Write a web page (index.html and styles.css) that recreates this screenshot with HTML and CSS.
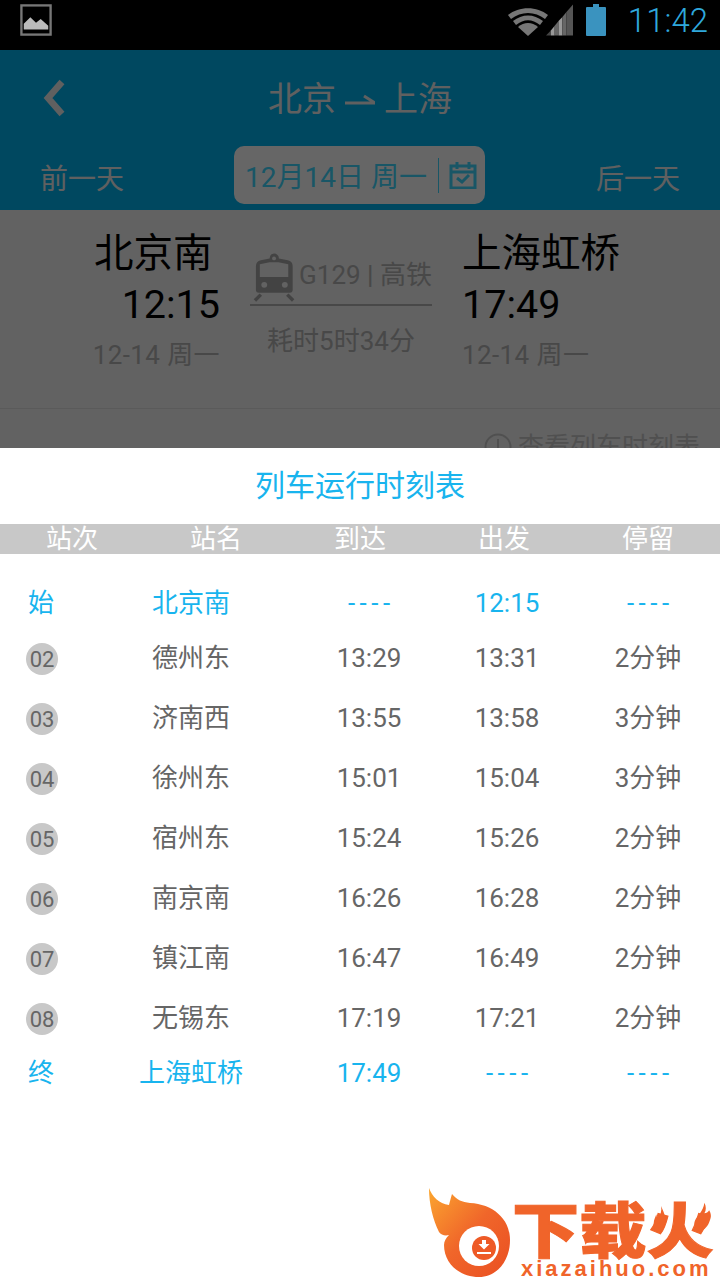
FILE: index.html
```html
<!DOCTYPE html>
<html lang="zh">
<head>
<meta charset="utf-8">
<title>列车运行时刻表</title>
<link rel="stylesheet" href="styles.css">
</head>
<body>
<div class="screen">
  <div class="status">
    <svg class="pic-icon" viewBox="0 0 34 34"><rect x="1.5" y="1.5" width="31" height="31" fill="#000" stroke="#777" stroke-width="2.5"/><path d="M4 27V21L11 14L17 20L22 16L30 23V27Z" fill="#bbb"/></svg>
    <div class="status-right">
      <svg class="wifi" viewBox="0 0 40 28"><path d="M0 7C11 -2 29 -2 40 7L37 11C27 3 13 3 3 11Z" fill="#777"/><path d="M5 13C14 5.500 26 5.500 35 13L32 17C24 10.500 16 10.500 8 17Z" fill="#777"/><path d="M10 19C16 13.500 24 13.500 30 19L20 28Z" fill="#777"/></svg>
      <svg class="signal" viewBox="0 0 28 32"><path d="M0 32L5 27V32Z" fill="#444"/><path d="M5 27L9 22V32H5Z" fill="#999"/><path d="M9 22L13 17V32H9Z" fill="#666"/><path d="M13 17L17 13V32H13Z" fill="#999"/><path d="M17 13L21 8V32H17Z" fill="#666"/><path d="M21 8L28 0V32H21Z" fill="#555"/></svg>
      <svg class="battery" viewBox="0 0 22 32"><path d="M8 0H14V3H20Q21 3 21 4V31Q21 32 20 32H2Q1 32 1 31V4Q1 3 2 3H8Z" fill="#3a93bf"/></svg>
      <span class="clock">11:42</span>
    </div>
  </div>

  <div class="page">
    <header class="head">
      <div class="title-row">
        <svg class="back" viewBox="0 0 24 38"><path d="M20 3L6 19L20 35" fill="none" stroke="#f0f0f0" stroke-width="6.500"/></svg>
        <h1 class="route">北京<svg class="route-arrow" viewBox="0 0 30 12"><path d="M0 10H30L19 3" fill="none" stroke="#f0f0f0" stroke-width="3"/></svg>上海</h1>
      </div>
      <div class="date-row">
        <span class="day-link">前一天</span>
        <div class="pill">
          <span>12月14日 周一</span>
          <i class="pill-bar"></i>
          <svg class="cal" viewBox="0 0 28 28"><path d="M2 5H26V27H2ZM2 11H26M8 1V8M20 1V8" fill="none" stroke="#40d8ff" stroke-width="3"/><path d="M8 17L13 21L20 14" fill="none" stroke="#40d8ff" stroke-width="3"/></svg>
        </div>
        <span class="day-link">后一天</span>
      </div>
    </header>

    <section class="trip">
      <div class="stop stop-from">
        <div class="stop-name">北京南</div>
        <div class="stop-time">12:15</div>
        <div class="stop-date">12-14 周一</div>
      </div>
      <div class="mid">
        <div class="mid-top">
          <svg class="train" viewBox="0 0 46 50"><path d="M22.500 1a5 5 0 0 1 5 5l9 2q5 1 5 6V38q0 3-3 3H7q-3 0-3-3V14q0-5 5-6l9-2a5 5 0 0 1 4.500-5Z" fill="#a8a8a8"/><path d="M8 12L18 10H27L37 12V25H8Z" fill="#f4f4f4"/><circle cx="22.500" cy="6" r="2" fill="#f4f4f4"/><circle cx="12.500" cy="33" r="3" fill="#f4f4f4"/><circle cx="33.500" cy="33" r="3" fill="#f4f4f4"/><path d="M9 43L3 49M36 43L42 49" stroke="#a8a8a8" stroke-width="3.500"/></svg>
          <span class="train-no">G129 <b class="sep">|</b> 高铁</span>
        </div>
        <div class="mid-line"></div>
        <div class="mid-dur">耗时5时34分</div>
      </div>
      <div class="stop stop-to">
        <div class="stop-name">上海虹桥</div>
        <div class="stop-time">17:49</div>
        <div class="stop-date">12-14 周一</div>
      </div>
    </section>

    <div class="link-row">
      <svg class="link-ico" viewBox="0 0 28 28"><circle cx="14" cy="14" r="12.500" fill="none" stroke="#c8c8c8" stroke-width="2"/><path d="M14 6V15" stroke="#c8c8c8" stroke-width="2"/></svg>
      <span>查看列车时刻表</span>
    </div>
  </div>

  <div class="dim"></div>

  <section class="sheet">
    <h2 class="sheet-title">列车运行时刻表</h2>
    <div class="cols">
      <span>站次</span><span>站名</span><span>到达</span><span>出发</span><span>停留</span>
    </div>
    <div class="list">
      <div class="row row-end"><span>始</span><span>北京南</span><span class="dash">----</span><span>12:15</span><span class="dash">----</span></div>
      <div class="row"><span class="num">02</span><span>德州东</span><span>13:29</span><span>13:31</span><span>2分钟</span></div>
      <div class="row"><span class="num">03</span><span>济南西</span><span>13:55</span><span>13:58</span><span>3分钟</span></div>
      <div class="row"><span class="num">04</span><span>徐州东</span><span>15:01</span><span>15:04</span><span>3分钟</span></div>
      <div class="row"><span class="num">05</span><span>宿州东</span><span>15:24</span><span>15:26</span><span>2分钟</span></div>
      <div class="row"><span class="num">06</span><span>南京南</span><span>16:26</span><span>16:28</span><span>2分钟</span></div>
      <div class="row"><span class="num">07</span><span>镇江南</span><span>16:47</span><span>16:49</span><span>2分钟</span></div>
      <div class="row"><span class="num">08</span><span>无锡东</span><span>17:19</span><span>17:21</span><span>2分钟</span></div>
      <div class="row row-end"><span>终</span><span>上海虹桥</span><span>17:49</span><span class="dash">----</span><span class="dash">----</span></div>
    </div>
  </section>

  <div class="logo">
    <svg class="logo-mark" viewBox="4 5 84 93">
      <defs><linearGradient id="flame" x1="0" y1="0" x2="1" y2="1"><stop offset="0" stop-color="#fba62f"/><stop offset=".5" stop-color="#f0662a"/><stop offset="1" stop-color="#ea4f22"/></linearGradient></defs>
      <path d="M5 6C8 14 15 22 25 23C26 19 27 15 28 12C33 18 38 20 46 21C68 22 86 36 86 58C86 80 72 95 55 95C36 95 20 82 20 63C20 59 22 56 25 53C21 54 17 53 15 50C9 38 5 22 5 6Z" fill="url(#flame)"/>
      <circle cx="55" cy="64" r="20" fill="#fff"/>
      <circle cx="60" cy="66" r="12" fill="#ee5a26"/>
      <path d="M58 58H62V62H65.500L60 67.500L54.500 62H58ZM53 70H67V72H53Z" fill="#fff"/>
    </svg>
    <div class="logo-text">
      <span class="logo-cn">下载火</span>
      <span class="logo-en">xiazaihuo.com</span>
      <svg class="logo-flame logo-flame-l" viewBox="0 0 16 32"><path d="M10 0C12 6 16 11 15 20C14 28 11 32 7 32C3 31 0 26 1 20C1 17 3 14 4 10C5 14 5 16 7 16C9 11 11 6 10 0ZM7 20C5 23 5 26 8 28C10 26 10 23 7 20Z" fill="#f0642a" fill-rule="evenodd"/></svg>
      <svg class="logo-flame logo-flame-r" viewBox="0 0 20 30"><path d="M12 0C14 4 14 8 12 11C14 11 16 10 17 8C18 10 20 13 18 18C16 25 12 29 7 30C3 28 0 24 2 19C4 14 11 9 12 0ZM9 20C6 22 5 25 8 27C11 26 11 22 9 20Z" fill="#f0642a" fill-rule="evenodd"/></svg>
    </div>
  </div>
</div>
</body>
</html>
```

FILE: styles.css
```css
* { box-sizing: border-box; }
html, body { margin: 0; padding: 0; }
body {
  font-family: Roboto, "Noto Sans CJK SC", sans-serif;
  background: #fff;
}
.screen {
  position: relative;
  width: 720px;
  height: 1280px;
  overflow: hidden;
  background: #f4f4f4;
}

/* status bar */
.status {
  position: relative;
  z-index: 3;
  height: 50px;
  background: #000;
  display: flex;
  justify-content: space-between;
  align-items: flex-start;
  padding: 4px 12px 0 20px;
}
.pic-icon { width: 32px; height: 32px; display: block; }
.status-right { display: flex; align-items: flex-start; }
.wifi { width: 40px; height: 28px; margin-top: 4px; display: block; }
.signal { width: 27px; height: 32px; margin: 0 0 0 -2px; display: block; }
.battery { width: 22px; height: 32px; margin: 0 0 0 12px; display: block; }
.clock {
  margin-left: 21px;
  font-size: 33px;
  font-weight: 300;
  line-height: 34px;
  color: #2fa8dc;
}

/* header */
.head {
  height: 160px;
  background: #00b4f0;
  color: #f0f0f0;
}
.title-row {
  position: relative;
  height: 96px;
  display: flex;
  justify-content: center;
  align-items: center;
}
.back {
  position: absolute;
  left: 42px;
  top: 29px;
  width: 24px;
  height: 38px;
}
.route {
  margin: 2px 0 0;
  font-size: 34px;
  font-weight: 400;
  line-height: 44px;
  display: flex;
  align-items: center;
}
.route-arrow { width: 30px; height: 12px; margin: 0 9px 0 9px; display: block; }
.date-row {
  display: flex;
  justify-content: space-between;
  align-items: flex-start;
  padding: 0 40px 0 40px;
}
.day-link {
  font-size: 28px;
  line-height: 40px;
  margin-top: 14px;
  color: #f0f0f0;
}
.pill {
  width: 251px;
  height: 58px;
  margin-left: -1px;
  border-radius: 10px;
  background: #fff;
  color: #40d8ff;
  display: flex;
  align-items: center;
  padding-left: 11px;
  font-size: 28px;
  white-space: nowrap;
}
.pill-bar {
  width: 1px;
  height: 35px;
  margin-left: 11px;
  background: #40d8ff;
}
.cal { width: 28px; height: 28px; margin-left: 10px; }

/* trip summary */
.trip {
  height: 199px;
  display: flex;
  align-items: flex-start;
  padding-top: 21px;
  border-bottom: 1px solid #e0e0e0;
}
.stop { width: 130px; white-space: nowrap; }
.stop-from { margin-left: 90px; text-align: right; }
.stop-to { margin-left: 30px; width: 200px; text-align: left; }
.stop-name { font-size: 39.5px; line-height: 46px; color: #000; text-align: left; }
.stop-from .stop-name { margin-left: 4px; }
.stop-time { font-size: 39.5px; line-height: 56px; color: #000; }
.stop-date { font-size: 26px; letter-spacing: .4px; line-height: 44px; color: #b4b4b4; }
.mid { width: 182px; margin-left: 30px; color: #b4b4b4; font-size: 26px; }
.mid-top { display: flex; align-items: flex-start; height: 50px; padding-left: 2px; margin-top: 21px; }
.train { width: 46px; height: 50px; display: block; }
.train-no { margin: 7px 0 0 2px; line-height: 32px; white-space: nowrap; }
.sep { font-weight: 500; }
.mid-line { height: 2px; background: #b4b4b4; margin-top: 2px; }
.mid-dur { text-align: center; line-height: 40px; margin-top: 15px; }

.link-row {
  display: flex;
  justify-content: flex-end;
  align-items: center;
  gap: 6px;
  padding: 21px 20px 0 0;
  font-size: 26px;
  line-height: 34px;
  color: #c8c8c8;
}
.link-ico { width: 28px; height: 28px; }

/* dim layer between page and sheet */
.dim {
  position: absolute;
  left: 0;
  right: 0;
  top: 50px;
  bottom: 0;
  background: rgba(0, 0, 0, .6);
}

/* bottom sheet */
.sheet {
  position: absolute;
  left: 0;
  right: 0;
  top: 448px;
  bottom: 0;
  background: #fff;
}
.sheet-title {
  margin: 0;
  height: 76px;
  font-size: 30px;
  font-weight: 400;
  line-height: 76px;
  text-align: center;
  color: #18b4ee;
}
.cols {
  height: 30px;
  background: #c8c8c8;
  display: grid;
  grid-template-columns: repeat(5, 144px);
  font-size: 26px;
  line-height: 30px;
  text-align: center;
  color: #fff;
}
.list { padding-top: 24px; }
.row {
  height: 60px;
  padding-bottom: 1px;
  display: grid;
  grid-template-columns: 82px 218px 138px 138px 144px;
  align-items: center;
  justify-items: center;
  font-size: 26px;
  line-height: 36px;
  color: #666;
}
.row-end { height: 50px; padding-bottom: 0; color: #18b4ee; }
.dash { letter-spacing: 4.5px; padding-left: 4.5px; }
.num {
  width: 32px;
  height: 32px;
  margin: 3px 0 0 2px;
  border-radius: 50%;
  background: #c8c8c8;
  font-size: 22px;
  line-height: 34px;
  text-align: center;
}

/* watermark logo */
.logo {
  position: absolute;
  left: 428px;
  top: 1187px;
  width: 292px;
  height: 93px;
  display: flex;
}
.logo-mark { width: 84px; height: 93px; display: block; flex: none; }
.logo-text {
  position: relative;
  display: flex;
  flex-direction: column;
  color: #f0642a;
  white-space: nowrap;
}
.logo-cn {
  display: block;
  font-size: 60px;
  font-weight: 900;
  line-height: 60px;
  margin-top: 10px;
  font-family: "Noto Sans CJK SC", sans-serif;
  transform: scaleX(1.12);
  transform-origin: left center;
  -webkit-text-stroke: 1px #f0642a;
}
.logo-en {
  font-family: "Liberation Sans", sans-serif;
  font-size: 22px;
  font-weight: 700;
  line-height: 18px;
  letter-spacing: 3px;
  margin: 3px 0 0 9px;
}
.logo-flame { position: absolute; }
.logo-flame-l { left: 141px; top: 16px; width: 13px; height: 32px; }
.logo-flame-r { left: 181px; top: 15px; width: 19px; height: 30px; }
```
